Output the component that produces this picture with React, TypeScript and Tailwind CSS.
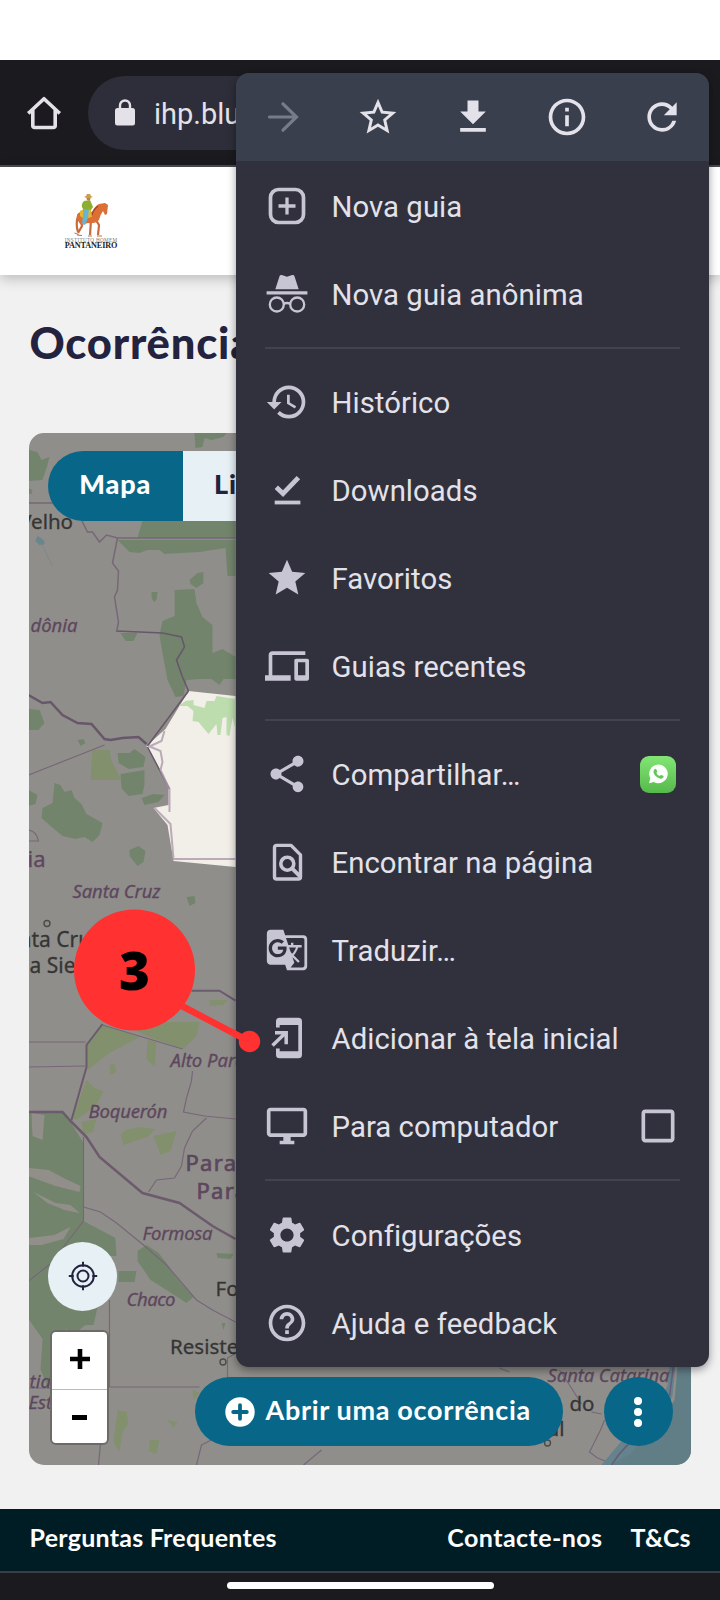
import type { ReactNode } from "react";
import {
  MdStarBorder, MdRefresh, MdInfoOutline, MdHistory, MdStar, MdDevices, MdShare,
  MdGTranslate, MdOutlineDesktopWindows, MdCheckBoxOutlineBlank, MdSettings, MdHelpOutline,
} from "react-icons/md";

function HomeIcon() {
  return (
    <svg viewBox="0 0 36 36" className="h-9 w-9 shrink-0" fill="none" stroke="#e4e2e8" strokeWidth="3.600" strokeLinejoin="round" strokeLinecap="square">
      <path d="M3.500 17.200 18 3.700l14.500 13.500M6.800 15v15.500q0 2 2 2h18.400q2 0 2-2V15" />
    </svg>
  );
}

function LockIcon() {
  return (
    <svg viewBox="0 0 20 27" className="h-[27px] w-5 shrink-0">
      <rect y="9" width="20" height="17.500" rx="2.500" fill="#e4e2e8" />
      <path d="M5 10V6.500a5 5 0 0 1 10 0V10" fill="none" stroke="#e4e2e8" strokeWidth="2.400" />
    </svg>
  );
}

function ForwardIcon() {
  return (
    <svg viewBox="0 0 44 44" className="size-11" fill="none" stroke="#777c8a" strokeWidth="3.200" strokeLinecap="round">
      <path d="M8.500 22h27M22 8.800 35.500 22 22 35.200" strokeLinejoin="miter" />
    </svg>
  );
}

function DownloadIcon() {
  return (
    <svg viewBox="0 0 24 24" className="size-11" fill="currentColor">
      <path d="M5 20h14v-2H5v2zM19 9h-4V3H9v6H5l7 7 7-7z" />
    </svg>
  );
}

function NewTabIcon() {
  return (
    <svg viewBox="0 0 44 44" className="size-11" fill="none" stroke="currentColor">
      <rect x="5.500" y="5.500" width="33" height="33" rx="8" strokeWidth="3.700" />
      <path d="M22 13.500v17M13.500 22h17" strokeWidth="3.300" />
    </svg>
  );
}

function IncognitoIcon() {
  return (
    <svg viewBox="0 0 44 44" className="size-11" fill="currentColor">
      <path d="M10.300 17.200 14.700 3.800Q15.300 2.600 16.800 3.100L22 4.800 27.200 3.100Q28.700 2.600 29.300 3.800L33.700 17.200ZM1.600 19.300h40.800v3.200H1.600z" />
      <g fill="none" stroke="currentColor" strokeWidth="2.300">
        <circle cx="11.800" cy="32.500" r="7" />
        <circle cx="32.200" cy="32.500" r="7" />
        <path d="M18.500 31.800q3.500-1.500 7 0" strokeWidth="2.600" />
      </g>
    </svg>
  );
}

function DownloadsIcon() {
  return (
    <svg viewBox="0 0 44 44" className="size-11">
      <path d="M11.300 19.300l6.700 6.300L33.400 9.600" fill="none" stroke="currentColor" strokeWidth="4.800" />
      <path d="M9.700 32.600h25.700v3.800H9.700z" fill="currentColor" />
    </svg>
  );
}

function FindInPageIcon() {
  return (
    <svg viewBox="0 0 44 44" className="size-11" fill="none" stroke="currentColor" strokeWidth="3.400">
      <path d="M11.200 5.400h14.900l9.400 9.500v22q0 2.100-2.100 2.100H11.600q-2.100 0-2.100-2.100V7.500q0-2.100 2.100-2.100Z" strokeLinejoin="round" />
      <circle cx="22.300" cy="23.700" r="6.500" strokeWidth="3.600" />
      <path d="M26.800 28.200l8 8" strokeWidth="3.800" />
    </svg>
  );
}

function AddToHomeIcon() {
  return (
    <svg viewBox="0 0 44 44" className="size-11" fill="currentColor">
      <path d="M14.600 1.700H33.400A3.600 3.600 0 0 1 37 5.300V38.700A3.600 3.600 0 0 1 33.400 42.300H14.600A3.600 3.600 0 0 1 11 38.700V32.400H14.700V35.200H33.300V9H14.700V11.600H11V5.300A3.600 3.600 0 0 1 14.600 1.700Z" />
      <path d="M7.500 29.500 20.500 17M10 16.800h11.200v11.400" fill="none" stroke="currentColor" strokeWidth="3.500" />
    </svg>
  );
}

function WhatsAppBadge() {
  return (
    <span className="mr-1 flex h-[37px] w-9 items-center justify-center rounded-[9px] bg-linear-to-b from-[#82e675] to-[#56b94b]">
      <svg viewBox="0 0 20 20" className="size-5">
        <path d="M1 19.200 2.300 14.300A9.300 9.300 0 1 1 5.800 17.900Z" fill="#fbfffb" />
        <path d="M6.500 5.200q.9-1 1.700 0l1 2q.2.700-.8 1.700 1 2.200 3.300 3.200 1-1.300 1.700-1.100l2 1q.6.400-.1 1.600-1.200 1.500-3.500.9-4.700-1.600-6.200-5.700-.5-2.200.9-3.600Z" fill="#64c659" />
      </svg>
    </span>
  );
}

function Row({ icon, label, end }: { icon: ReactNode; label: string; end?: ReactNode }) {
  return (
    <div className="flex h-[88px] items-center">
      <span className="flex size-11 shrink-0 items-center justify-center text-[#c7c5d3]">{icon}</span>
      <span className="ml-[22.500px] flex-1 whitespace-nowrap pt-1 text-[29.300px] tracking-[0.060px] text-[#e3e1e9]">{label}</span>
      {end && <span className="text-[#c7c5d3]">{end}</span>}
    </div>
  );
}

function Divider() {
  return (
    <div className="flex h-[20.400px] items-center">
      <div className="h-0.5 w-full bg-[#42434e]" />
    </div>
  );
}

function Menu() {
  return (
    <div className="absolute top-[73px] left-[236px] flex h-[1293.500px] w-[473px] flex-col overflow-hidden rounded-[13px] bg-[#30313d] font-[Roboto,sans-serif] shadow-[0_3px_9px_rgba(0,0,0,0.4)]">
      <div className="flex h-[88px] shrink-0 items-center bg-[#3a3f4d] text-[#e3e1e9]">
        <span className="flex flex-1 justify-center"><ForwardIcon /></span>
        <span className="flex flex-1 justify-center"><MdStarBorder size={44} /></span>
        <span className="flex flex-1 justify-center pl-px"><DownloadIcon /></span>
        <span className="flex flex-1 justify-center"><MdInfoOutline size={44} /></span>
        <span className="flex flex-1 justify-center"><MdRefresh size={44} /></span>
      </div>
      <div className="flex flex-col px-[29px] pt-[0.500px]">
        <Row icon={<NewTabIcon />} label="Nova guia" />
        <Row icon={<IncognitoIcon />} label="Nova guia anônima" />
        <Divider />
        <Row icon={<MdHistory size={44} />} label="Histórico" />
        <Row icon={<DownloadsIcon />} label="Downloads" />
        <Row icon={<MdStar size={44} />} label="Favoritos" />
        <Row icon={<MdDevices size={44} />} label="Guias recentes" />
        <Divider />
        <Row icon={<MdShare size={44} />} label="Compartilhar…" end={<WhatsAppBadge />} />
        <Row icon={<FindInPageIcon />} label="Encontrar na página" />
        <Row icon={<MdGTranslate size={44} />} label="Traduzir…" />
        <Row icon={<AddToHomeIcon />} label="Adicionar à tela inicial" />
        <Row icon={<MdOutlineDesktopWindows size={44} />} label="Para computador" end={<MdCheckBoxOutlineBlank size={44} />} />
        <Divider />
        <Row icon={<MdSettings size={44} />} label="Configurações" />
        <Row icon={<MdHelpOutline size={44} />} label="Ajuda e feedback" />
      </div>
    </div>
  );
}

function Logo() {
  return (
    <div className="ml-[63px] flex w-14 flex-col items-center">
      <svg viewBox="72 190 38 45" className="h-[45px] w-[38px]">
        <path d="M79 211q-3 5-2 14l1 4M81 215l1 8-4 7M94 214l5 8-1 10M91 217l-1 15" stroke="#c96a3a" strokeWidth="2.200" fill="none" />
        <path d="M77 212q2-4 8-3l7 0q3-6 7-8l6-1 3 2-1 9-2 1-2-4q-3 4-4 9-4 4-11 3l-7 2q-4-4-4-10Z" fill="#dc6f36" />
        <path d="M98 203q-5 4-6 9" stroke="#a94824" strokeWidth="1.500" fill="none" />
        <path d="M80 208q3-3 11-1l1 7-8 2-4-3Z" fill="#e6b52b" />
        <path d="M83 205h6l-1 10-3 7-3-1 1-8Z" fill="#64b6d2" />
        <path d="M84 198l6-1 3 7-2 3-8-1q-3-4 1-8Z" fill="#8cae31" />
        <circle cx="88.500" cy="195.500" r="2" fill="#c67d4d" />
        <path d="M84 194q4 2 9 0l-2-1-1-2h-3l-1 2Z" fill="#caa145" />
        <path d="M74.500 230l4 1.500M77 232l5 .5M88 233h4M97 233h5" stroke="#a5745c" strokeWidth="1" />
      </svg>
      <div className="whitespace-nowrap font-['Liberation_Serif',serif] text-[5.200px] leading-[5px] tracking-[0.3px] text-[#777]">INSTITUTO HOMEM</div>
      <div className="-mt-px whitespace-nowrap font-['Liberation_Serif',serif] text-[8.200px] leading-[7px] font-bold tracking-[-0.15px] text-[#222]">PANTANEIRO</div>
    </div>
  );
}

function MapCanvas() {
  return (
    <svg viewBox="29.500 433 662 1032" className="absolute inset-0 h-full w-full">
      <rect x="29" y="433" width="663" height="1032" fill="#908e8a" />
      <g fill="#72856c">
        <path d="M29 450l9 2 4 8 8-3-2 8-5 15-14 1ZM195 433h32l-3 4-12 3-7-2-2 9-7 1ZM29 488l4 2-1 4h-3Z" />
        <path d="M138 538l5-18h93v18ZM118 540h118v36h-8l-2-28-26 4-35 2-5-4-12 0-8 3-10-1Z" />
        <path d="M190 580l8-7 6-1v11l-7 5-6-4ZM152 592l6 0-1 8-3 2-2-5ZM121 633l17 0-4 8-8 0Z" />
        <path d="M175 590l20-1 2 14 6 14 10 8v28l10-4 13 8v22l-12 0-4 6-8-6-12 0-13 1-3 16-8 1-8-17-5-27-3-18 3-14 12-5Z" />
        <path d="M29 709l11 1 5 13-6 7-10 0ZM78 740l6-1 2 4-5 3ZM121 774l24-4v15l-2 9-14 2-7-8Z" />
        <path d="M118 753l12 0 5-4 11 8-2 10-15 2-10-6ZM55 783l6 2 4 7 7-2 3 8 7 6 5 10 16 9-3 12-7 7-8-5-9 2-13-3-12-10-9-8 1-10 10-5ZM130 850l9-4 7 5-2 11-6 4-8-10ZM187 897l8-1 1 7-6 3ZM142 798l12-4 11 1-6 7-14 3ZM29 790l9 5-2 9-7 2Z" />
        <path d="M29 1112h34l8 10 13 21v78l32 17-1 15-30-4-24 4-8 16-31 17Z" />
        <path d="M29 1260l30-2 12-30 45 13 1 15-30 0 15 34-8 35-8 0-10 8-10-4-4 33-14 25-7-18 2-30-14-20Z" />
        <path d="M119 1271l18 0-2 11-16 0ZM138 1251l9-6 12 8 8 10 10 15 17 19-7 6-20-13-16-10-13-19ZM217 1253l17 1-3 5-13-1ZM222 1323l4 0-2 7Z" />
      </g>
      <g fill="#82906d">
        <path d="M93 750h17l2 11 10 19H91Z" />
        <path d="M102 1025l38 12-30 16-22 17-1-24ZM157 1022h43l-3 14-13 13-37-13-12-6ZM210 1000l18 0-4 5-14 1ZM148 1040l9 2-2 25-8-8ZM110 1065l5-1 2 8-6 3ZM87 1080l8 8 9 3-7 14-20 15-4-2ZM126 1130l14-3 16 2-8 8-24 8-3-10ZM154 1136l23-5-6 20-10 4ZM82 1122l15-3-4 13-9 3Z" />
        <path d="M118 1410l9 2 2 12-6 8-3 20-6-10ZM150 1440l10 0-3 14-8-3ZM193 1390l7 3-6 7ZM168 1420l10 2-4 6Z" />
      </g>
      <g fill="#928f8b">
        <path d="M29 1168l20 2 15 8 17 8-1 6-24-6-27-10ZM34 1192l22 11 15 2 9 8-15-3-17-7ZM32 1113l13 2-2 25-10-4Z" />
        <path d="M30 1238l25-3 16-8-7 12-22 6-13 0Z" />
      </g>
      <path d="M38 536l6 4 1 4-5 1-4-4ZM43 545l5 11 5 10" fill="#68868e" stroke="#74878a" strokeWidth="0.600" />
      <path d="M189 691l47 5v171l-62-6-6-36-14-17 15-3v-17l-22-42 19-17Z" fill="#f2efe9" />
      <path d="M186 701l8-1 0 5 11 3 2-7 8 0 2-5 19 3v30l-3-11-3 18-3-1v-18l-4 1-2 17-3 0-1-11-8 10-10-12-6-1 1-10-6-5-9 0Z" fill="#b5d9a4" opacity=".85" />
      <path d="M29 695l14 8 8-1 12 13 15 8 14 1 13 15 6 1 12-2 16-1 8 7" stroke="#67576a" strokeWidth="2.500" fill="none" />
      <path d="M148 746l41-55M148 747l22 42M117 631l46 2 19 4 3 10-8 13 6 17 6 14" stroke="#67576a" strokeWidth="1.600" fill="none" />
      <path d="M149 746l12 5 2 11-2 8 9 19v23M155 808l16 16 3 35h62M165 731l-3 10-11 5" stroke="#ad99ad" strokeWidth="2" fill="none" opacity=".8" />
      <g stroke="#776779" strokeWidth="1.200" fill="none">
        <path d="M29 503h52M82 520l6 12 5 0 7 10 7-7 11 3h118" strokeWidth="1.500" />
        <path d="M118 538l-5 25 6 8-1 19-3 7 4 25-2 10" strokeWidth="1.500" />
        <path d="M29 775l76-30M29 830q8 1 10 11h-10M29 1042h57M29 1067l57-1M103 1025l80 24M193 1071l-1 10-5 17-3 14 21 4 31 3M207 1118l-14 13-8 17-3 18-7 12-18 2-8 12" />
        <path d="M84 1137v84l-17 22-15 20-23 18M110 1300v87h90M84 1207l17 5 16 11 27 22 23 20 30 35 16 10 23 12M29 1388h22M101 1443l-2 22M212 1440l-10 5-5 20M322 1450l-18 15M500 1368l10 4" />
        <path d="M228 1378v-20l7-4M560 1370l10 15 12 19M592 1412l10 2M605 1420l-4 10-11 22 8 6 16 6" />
      </g>
      <path d="M103 1024l-16 21v22l-15 53M192 990.700h28l16 10" stroke="#6c5a6d" strokeWidth="2" fill="none" />
      <path d="M29 1112h34l8 9 16 16 13 20 43 36 37 10 33 23 23 13" stroke="#6c5a6d" strokeWidth="2.500" fill="none" />
      <path d="M692 1366h-14l-3 34-25 36-32 14-15 15h89Z" fill="#617e86" />
      <path d="M676 1366l-3 30-15 28-27 30-20 11h-9l20-24 28-25 18-30 2-20Z" fill="#64838c" />
      <path d="M674 1366l-4 30M645 1432q-20 12-33 33" stroke="#695c79" strokeWidth="1.500" fill="none" />
      <g className="font-['Noto_Sans',sans-serif]" fontSize="20.500" fill="#353535" stroke="#353535" strokeWidth="0.300">
        <text x="73.500" y="529" textAnchor="end">Velho</text>
        <text x="19" y="947" fontSize="21">nta Cruz</text>
        <text x="30" y="973" fontSize="21">a Sierra</text>
        <text x="216" y="1296">Formosa</text>
        <text x="170.500" y="1354">Resistencia</text>
        <text x="570" y="1411">do</text>
        <text x="547" y="1436">ul</text>
      </g>
      <g className="font-['Noto_Sans',sans-serif]" fill="#5d475e" stroke="#5d475e" strokeWidth="0.300">
        <text x="28" y="867" fontSize="22">ia</text>
        <g fontSize="22" letterSpacing="1.300" strokeWidth="0.700">
          <text x="186" y="1171">Paraguay</text>
          <text x="197" y="1199">Paraguái</text>
        </g>
        <g fontStyle="italic" fontSize="18.500">
          <text x="31" y="632" textLength="47">dônia</text>
          <text x="73" y="898" textLength="88">Santa Cruz</text>
          <text x="171" y="1066.500">Alto Paraguay</text>
          <text x="89" y="1118" textLength="79">Boquerón</text>
          <text x="143" y="1240" textLength="70">Formosa</text>
          <text x="127" y="1306" textLength="49">Chaco</text>
          <text x="30" y="1388">tiago</text>
          <text x="29" y="1409">Estero</text>
          <text x="548" y="1382" textLength="122">Santa Catarina</text>
        </g>
      </g>
      <g fill="none" stroke="#4b4b4b" strokeWidth="1.400">
        <circle cx="47.500" cy="923.500" r="3" />
        <circle cx="223.500" cy="1362" r="3" />
        <circle cx="548" cy="1443" r="3" />
      </g>
    </svg>
  );
}

function Callout() {
  return (
    <div className="absolute top-[909px] left-[74px] h-[146px] w-[188px]">
      <svg viewBox="74 909 188 146" className="absolute inset-0 h-full w-full">
        <path d="M180 1005l69.500 36.500" stroke="#ff3131" strokeWidth="6.500" />
        <circle cx="134.500" cy="970" r="60.500" fill="#ff3131" />
        <circle cx="249.500" cy="1041.500" r="10.700" fill="#ff3131" />
      </svg>
      <div className="relative flex h-[121px] w-[121px] items-center justify-center font-['Open_Sans',sans-serif] text-[53px] font-extrabold text-black">3</div>
    </div>
  );
}

export default function App() {
  return (
    <div className="relative flex h-[1600px] w-[720px] flex-col overflow-hidden bg-[#f1f1f1] font-[Lato,sans-serif]">
      <div className="h-[60px] shrink-0 bg-white" />
      <div className="flex h-[107px] shrink-0 items-center border-b-2 border-[#4b4b50] bg-[#1b1b1f] pr-16 pl-[26px]">
        <HomeIcon />
        <div className="ml-[26px] flex h-[74px] flex-1 items-center rounded-full bg-[#2d2e39] pl-[27px]">
          <LockIcon />
          <span className="ml-[19px] pt-1 font-[Roboto,sans-serif] text-[29px] text-[#e4e2e8]">ihp.bluforest</span>
        </div>
      </div>
      <header className="flex h-[108px] shrink-0 items-center bg-white shadow-[0_4px_12px_rgba(0,0,0,0.22)]">
        <Logo />
      </header>
      <h1 className="mt-[37px] ml-[29.500px] h-[60px] shrink-0 text-[43.500px] leading-[60px] font-black tracking-[0.8px] text-[#23233f]">Ocorrências</h1>

      <main className="relative mx-auto mt-[61px] h-[1032px] w-[662px] shrink-0 overflow-hidden rounded-[15px]">
        <MapCanvas />
        <div className="absolute top-[18px] left-[18.500px] flex h-[69.500px] overflow-hidden rounded-full text-[27px] font-black tracking-[0.9px]">
          <div className="flex w-[135.500px] items-center justify-center bg-[#086788] pb-1 text-white">Mapa</div>
          <div className="flex w-[136px] items-center bg-[#e6f0f5] pb-1 pl-[31px] text-[#23233f]">Lista</div>
        </div>
        <div className="absolute top-[808.500px] left-[19px] flex size-[69px] items-center justify-center rounded-full bg-[#e6f0f5]">
          <svg viewBox="0 0 30 30" className="size-[30px]" fill="none" stroke="#23233f" strokeWidth="2">
            <circle cx="15" cy="15" r="10.800" />
            <circle cx="15" cy="15" r="5.500" />
            <path d="M15 .8v5M15 24.200v5M.8 15h5M24.200 15h5" />
          </svg>
        </div>
        <div className="absolute top-[897px] left-[20.500px] flex h-[115px] w-[59px] flex-col rounded-md border-2 border-[#6d6b68] bg-white">
          <div className="flex flex-1 items-center justify-center border-b border-[#bbb] pb-[3px]">
            <svg viewBox="0 0 20 20" className="ml-px size-5"><path d="M0 10h20M10 0v20" stroke="#000" strokeWidth="4.600" /></svg>
          </div>
          <div className="flex flex-1 items-center justify-center">
            <div className="mt-0.5 ml-px h-[5px] w-[15px] bg-black" />
          </div>
        </div>
        <div className="absolute top-[944px] left-[165.500px] flex h-[69px] w-[368px] items-center rounded-full bg-[#086788] pl-[30px] text-white">
          <svg viewBox="0 0 30 30" className="size-[30px] shrink-0">
            <circle cx="15" cy="15" r="14.700" fill="#fff" />
            <path d="M15 8.200v13.600M8.200 15h13.600" stroke="#086788" strokeWidth="3.800" strokeLinecap="round" />
          </svg>
          <span className="ml-[11px] whitespace-nowrap pb-[3px] text-[27px] font-bold tracking-[0.67px]">Abrir uma ocorrência</span>
        </div>
        <div className="absolute top-[944px] left-[574.500px] flex size-[69px] flex-col items-center justify-center gap-[3px] rounded-full bg-[#086788]">
          <span className="size-2 rounded-full bg-white" />
          <span className="size-2 rounded-full bg-white" />
          <span className="size-2 rounded-full bg-white" />
        </div>
      </main>

      <footer className="mt-11 flex h-[62px] shrink-0 items-center bg-[#001d26] px-[29.500px] pb-1 text-[25px] font-bold text-white">
        <span className="tracking-[0.25px]">Perguntas Frequentes</span>
        <span className="ml-auto tracking-[0.45px]">Contacte-nos</span>
        <span className="ml-7">T&amp;Cs</span>
      </footer>
      <div className="flex flex-1 items-center justify-center border-t-2 border-[#3a3d43] bg-[#1b1b1f] pb-0.5">
        <div className="h-[7px] w-[267px] rounded-full bg-white" />
      </div>
      <Menu />
      <Callout />
    </div>
  );
}
